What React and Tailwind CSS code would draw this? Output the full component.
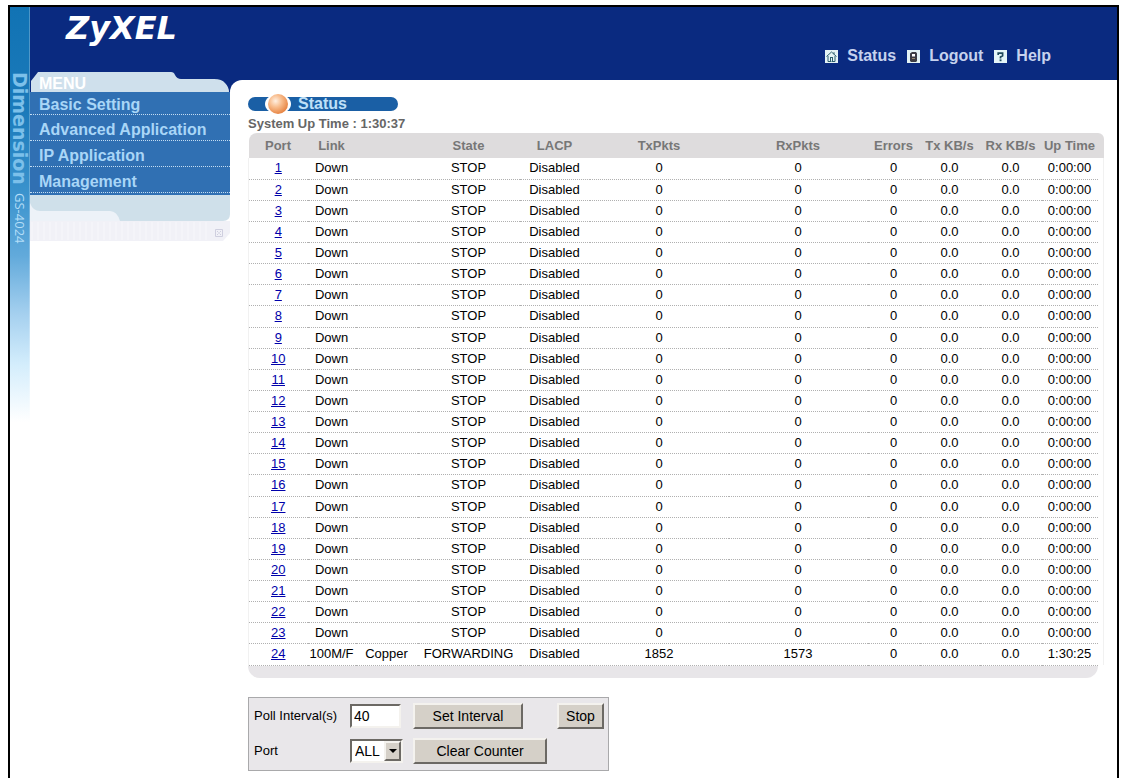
// src/App.jsx
import React, { useState } from "react";

const MENU_ITEMS = ["Basic Setting", "Advanced Application", "IP Application", "Management"];

// Ports 1-23 are idle, only the uplink on 24 carries traffic
const PORTS = [
  ...Array.from({ length: 23 }, (_, i) => ({
    port: i + 1,
    link: "Down",
    media: "",
    state: "STOP",
    lacp: "Disabled",
    tx: 0,
    rx: 0,
    errors: 0,
    txRate: "0.0",
    rxRate: "0.0",
    upTime: "0:00:00",
  })),
  {
    port: 24,
    link: "100M/F",
    media: "Copper",
    state: "FORWARDING",
    lacp: "Disabled",
    tx: 1852,
    rx: 1573,
    errors: 0,
    txRate: "0.0",
    rxRate: "0.0",
    upTime: "1:30:25",
  },
];

const HomeIcon = () => (
  <svg width="13" height="13" viewBox="0 0 13 13" aria-hidden="true">
    <rect width="13" height="13" fill="#e4f3f5" />
    <path d="M1.5 6.5 6.5 2l5 4.5M3 6v5.5h7V6M9 2.2v2" fill="none" stroke="#2c5f6e" />
    <rect x="5" y="7" width="3" height="4.5" fill="#2c5f6e" />
    <path d="M6.5 8v3.5" stroke="#e4f3f5" />
  </svg>
);

const LogoutIcon = () => (
  <svg width="13" height="13" viewBox="0 0 13 13" aria-hidden="true">
    <rect width="13" height="13" fill="#e4f3f5" />
    <path d="M3 3.5 5 2h4l1 1.5V11L9 12H4l-1-1Z" fill="#3c3c44" />
    <path d="M5 4h3v2.5H5z" fill="#fff" />
    <path d="M5 8.5h3" stroke="#9a8a70" />
  </svg>
);

const HelpIcon = () => (
  <svg width="13" height="13" viewBox="0 0 13 13" aria-hidden="true">
    <rect width="13" height="13" fill="#e4f5f8" />
    <path d="M4.2 5V3.2h4.4v2.6L6.5 7v1.4" fill="none" stroke="#1f4a5c" strokeWidth="1.7" />
    <rect x="5.6" y="9.4" width="1.9" height="1.8" fill="#1f4a5c" />
  </svg>
);

const TOP_LINKS = [
  { label: "Status", Icon: HomeIcon },
  { label: "Logout", Icon: LogoutIcon },
  { label: "Help", Icon: HelpIcon },
];

const Header = () => (
  <header className="flex h-[65px] items-start justify-between bg-[#0a2a80] pl-9 pr-[66px]">
    <div className="font-['DejaVu_Sans',sans-serif] text-[32px] font-bold italic leading-[42px] text-white">
      ZyXEL
    </div>
    <nav className="flex gap-[11px] pt-10">
      {TOP_LINKS.map(({ label, Icon }) => (
        <a
          key={label}
          href="#"
          className="flex items-center gap-[9px] text-base font-bold leading-[18px] text-[#c6d2ee]"
        >
          <Icon />
          {label}
        </a>
      ))}
    </nav>
  </header>
);

const SideStrip = () => (
  <div className="flex h-[415px] w-5 shrink-0 items-center gap-2 border-r border-[#ffffff40] bg-[linear-gradient(180deg,#1173b4_0%,#1b7aba_25%,#3b93cd_45%,#62aadb_60%,#a5d0ef_74%,#d3edfc_86%,#ffffff_100%)] pt-[65px] [writing-mode:vertical-rl]">
    <span className="font-['DejaVu_Sans',sans-serif] text-[19px] font-bold leading-5 text-[#7cc0ea]">
      Dimension
    </span>
    <span className="font-['Open_Sans',sans-serif] text-[13px] leading-5 text-[#b4def8]">GS-4024</span>
  </div>
);

const Sidebar = () => (
  <aside className="w-[200px] shrink-0">
    {/* Tab on top of the menu */}
    <div className="relative h-5 bg-[#0a2a80]">
      <svg className="absolute inset-0" width="200" height="20" viewBox="0 0 200 20" aria-hidden="true">
        <path
          d="M1 20V9Q5 4 8 0H141Q144 0 145 3Q147 7 151 7H184Q192 7 195 11Q199 15 199 20Z"
          fill="#cfe0ec"
        />
      </svg>
      <h2 className="relative pl-[9px] pt-[3px] text-base leading-[18px] font-bold text-white">MENU</h2>
    </div>
    <ul className="bg-[#3070b3] pb-[2px]">
      {MENU_ITEMS.map((item) => (
        <li
          key={item}
          className="flex h-[26px] items-center border-b border-dotted border-[#c4ddf2] pl-[9px] pt-1 first:h-[23px]"
        >
          <a href="#" className="text-base font-bold leading-5 text-[#a9d6f7]">
            {item}
          </a>
        </li>
      ))}
    </ul>
    <svg className="block" width="200" height="46" viewBox="0 0 200 46" aria-hidden="true">
      <path d="M0 26h200v12l-7 8H0Z" fill="#f1f1f7" />
      <path
        d="M2 27v18M8 27v18M14 27v18M20 27v18M26 27v18M32 27v18M38 27v18M44 27v18M50 27v18M56 27v18M62 27v18M68 27v18M74 27v18M80 27v18M86 27v18M92 27v18M98 27v18M104 27v18M110 27v18M116 27v18M122 27v18M128 27v18M134 27v18M140 27v18M146 27v18M152 27v18M158 27v18M164 27v18M170 27v18M176 27v18"
        stroke="#f7f7fb"
      />
      <path d="M0 0h200v19q0 7-7 7H0Z" fill="#cfe0ea" />
      <path d="M0 8Q3 16 10 16H80Q87 16 90 26H0Z" fill="#edf2f8" />
      <path
        d="M185.5 34.5h7v7h-7zM187 36l1.5 1.5M191 36l-1.5 1.5M187 40l1.5-1.5M191 40l-1.5-1.5"
        fill="none"
        stroke="#cfcfdf"
      />
    </svg>
  </aside>
);

const StatusTitle = () => (
  <div className="mt-4 flex h-[14px] w-[150px] items-center rounded-full bg-[#1a5fa5] pl-[18px]">
    <svg className="shrink-0 overflow-visible" width="24" height="14" viewBox="0 0 24 14" aria-hidden="true">
      <defs>
        <radialGradient id="ball" cx="38%" cy="35%" r="70%">
          <stop offset="0" stopColor="#fff0e2" />
          <stop offset="0.45" stopColor="#f8bc8c" />
          <stop offset="1" stopColor="#e57f3c" />
        </radialGradient>
      </defs>
      <ellipse cx="12" cy="7" rx="13" ry="10" fill="#fff" />
      <circle cx="12" cy="7" r="10" fill="url(#ball)" />
    </svg>
    <h1 className="pl-2 text-base font-bold leading-[14px] text-[#bfe0f8]">Status</h1>
  </div>
);

const PortTable = () => (
  <div className="mt-px">
    <table className="w-full table-fixed border-collapse text-center text-[13px] leading-4">
      <colgroup>
        <col className="w-[59px]" />
        <col className="w-12" />
        <col className="w-[62px]" />
        <col className="w-[102px]" />
        <col className="w-[70px]" />
        <col />
        <col />
        <col className="w-[52px]" />
        <col className="w-[60px]" />
        <col className="w-[62px]" />
        <col className="w-14" />
        <col className="w-[6px]" />
      </colgroup>
      <thead className="text-[#777777]">
        <tr className="h-[25px] whitespace-nowrap [&>th]:bg-[#dedcdd] [&>th]:p-0">
          <th className="rounded-tl-lg">Port</th>
          <th>Link</th>
          <th></th>
          <th>State</th>
          <th>LACP</th>
          <th>TxPkts</th>
          <th>RxPkts</th>
          <th>Errors</th>
          <th>Tx KB/s</th>
          <th>Rx KB/s</th>
          <th>Up Time</th>
          <th className="rounded-tr-lg"></th>
        </tr>
      </thead>
      <tbody className="border-x border-[#f1f1f1] text-black">
        {PORTS.map((p) => (
          <tr
            key={p.port}
            className="h-[21px] nth-[8n]:h-[22px] [&>td]:border-b [&>td]:border-dotted [&>td]:border-[#b0b0b0] [&>td]:p-0"
          >
            <td>
              <a href="#" className="text-[#0000aa] underline">
                {p.port}
              </a>
            </td>
            <td>{p.link}</td>
            <td>{p.media}</td>
            <td>{p.state}</td>
            <td>{p.lacp}</td>
            <td>{p.tx}</td>
            <td>{p.rx}</td>
            <td>{p.errors}</td>
            <td>{p.txRate}</td>
            <td>{p.rxRate}</td>
            <td>{p.upTime}</td>
            <td className="border-none!"></td>
          </tr>
        ))}
      </tbody>
    </table>
    <div className="mr-[6px] h-3 rounded-b-xl bg-[#e8e6e9]"></div>
  </div>
);

const BUTTON =
  "h-[26px] border-2 border-t-[#f4f2ee] border-l-[#f4f2ee] border-b-[#6c6964] border-r-[#6c6964] bg-[#d5d0c8] text-[14px] leading-5 text-black";

const PollForm = () => {
  const [interval, setInterval] = useState("40");

  return (
    <form
      onSubmit={(e) => e.preventDefault()}
      className="mt-[19px] flex h-[74px] w-[361px] flex-col gap-[9px] border border-[#a9a9ab] bg-[#e9e7ea] pl-[5px] pr-1 pt-[5px] text-[13px] text-black"
    >
      <div className="flex items-center">
        <label htmlFor="poll" className="w-24 whitespace-nowrap">
          Poll Interval(s)
        </label>
        <input
          id="poll"
          value={interval}
          onChange={(e) => setInterval(e.target.value)}
          className="h-6 w-[51px] border-2 border-b-[#f4f2ee] border-l-[#6c6964] border-r-[#f4f2ee] border-t-[#6c6964] bg-white pl-[2px] text-[14px]"
        />
        <button className={`${BUTTON} ml-3 w-[110px]`}>Set Interval</button>
        <button className={`${BUTTON} ml-auto w-[47px]`}>Stop</button>
      </div>
      <div className="flex items-center">
        <label htmlFor="port" className="w-24">
          Port
        </label>
        <div className="relative h-6 w-[53px] border-2 border-b-[#f4f2ee] border-l-[#6c6964] border-r-[#f4f2ee] border-t-[#6c6964] bg-white">
          <select id="port" className="h-full w-full appearance-none pl-[3px] text-[14px] leading-5">
            <option>ALL</option>
          </select>
          <span className="pointer-events-none absolute inset-y-0 right-0 flex w-[17px] items-center justify-center border-2 border-b-[#6c6964] border-l-[#f4f2ee] border-r-[#6c6964] border-t-[#f4f2ee] bg-[#d5d0c8]">
            <svg width="8" height="4" viewBox="0 0 8 4" className="shrink-0" aria-hidden="true">
              <path d="M0 0h8L4 4Z" fill="#000" />
            </svg>
          </span>
        </div>
        <button className={`${BUTTON} ml-[10px] w-[134px]`}>Clear Counter</button>
      </div>
    </form>
  );
};

const App = () => {
  return (
    <div className="flex min-h-screen flex-col bg-white pl-2 pr-[2px] pt-[5px] font-['Liberation_Sans',Arial,sans-serif]">
      <div className="flex grow items-stretch border-x-2 border-t-2 border-black">
        <SideStrip />
        <div className="min-w-0 grow">
          <Header />
          <div className="flex">
            <Sidebar />
            <div className="min-w-0 grow">
              <div className="bg-[#0a2a80] pt-2">
                <main className="rounded-tl-xl bg-white pl-[18px] pr-[13px] pt-px">
                  <StatusTitle />
                  <p className="mt-[5px] text-[13px] font-bold leading-4 text-[#666666]">
                    System Up Time : 1:30:37
                  </p>
                  <PortTable />
                  <PollForm />
                </main>
              </div>
            </div>
          </div>
        </div>
      </div>
    </div>
  );
};

export default App;
